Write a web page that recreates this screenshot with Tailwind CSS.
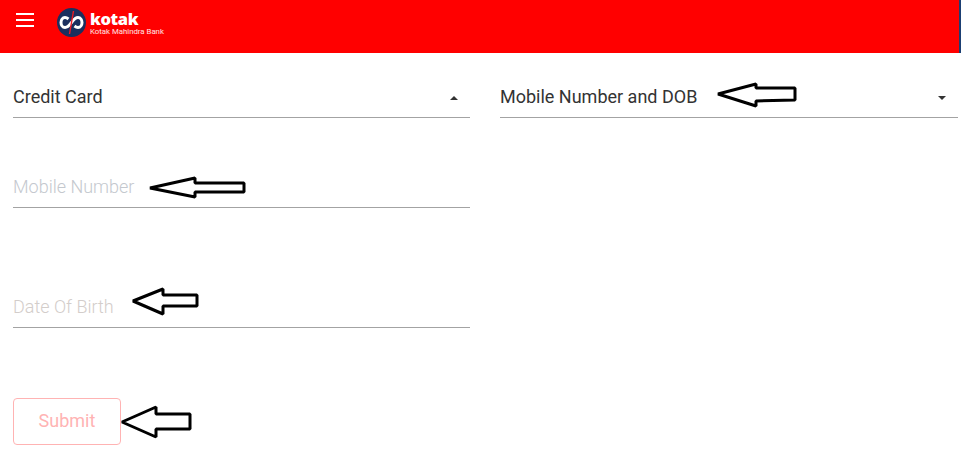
<!DOCTYPE html>
<html lang="en">
  <head>
    <meta charset="UTF-8" />
    <meta name="viewport" content="width=device-width, initial-scale=1.0" />
    <title>Kotak</title>
    <script src="https://cdn.jsdelivr.net/npm/@tailwindcss/browser@4"></script>
  </head>
  <body class="relative h-[450px] overflow-hidden bg-white font-['Roboto',sans-serif]">
    <header class="flex h-[53px] items-start border-r-2 border-[#1b3f73] bg-[#ff0000] pl-4 pt-[8px]">
      <button class="mt-[5px] flex w-[18px] flex-col gap-[4px]">
        <span class="h-[2px] bg-white"></span>
        <span class="h-[2px] bg-white"></span>
        <span class="h-[2px] bg-white"></span>
      </button>
      <div class="ml-[23px] flex items-start gap-[4px]">
        <svg width="29" height="29" viewBox="0 0 29 29">
          <circle cx="14.5" cy="14.5" r="14.5" fill="#1b2f5e" />
          <path d="M11.500 11C10 9.800 9 9.500 8 9.500C5.500 9.500 4 12 4 14.500C4 17 5.500 19.500 8 19.500C11 19.500 13 16.500 14.500 14.500C16 12.500 18 9.500 21 9.500C23.500 9.500 25 12 25 14.500C25 17 23.500 19.500 21 19.500C20 19.500 19 19.200 17.500 18" fill="none" stroke="#fff" stroke-width="3" />
          <path d="M16.500 3 12.500 26" stroke="#ed1c24" stroke-width="1.400" />
        </svg>
        <div class="flex flex-col pt-[3px]">
          <span class="font-['Open_Sans',sans-serif] text-[16.500px] leading-[15px] font-extrabold tracking-[-0.4px] text-white">kotak</span>
          <span class="pt-[1px] text-[7.800px] leading-[9px] text-white/90">Kotak Mahindra Bank</span>
        </div>
      </div>
    </header>

    <form class="grid grid-cols-[457px_458px] gap-x-[30px] pl-[13px]">
      <div class="flex flex-col">
        <div class="flex h-[65px] items-end justify-between border-b border-[#a3a3a3] pb-[8px] text-[18px] leading-[24px] text-[#333]">
          <span>Credit Card</span>
          <span class="mr-[12px] mb-[9px] h-0 w-0 border-x-[4px] border-b-[4px] border-x-transparent border-b-[#333]"></span>
        </div>
        <div class="mt-[48px] h-[42px] border-b border-[#a3a3a3] pt-[9px] text-[18px] leading-[24px] font-light text-[#c4c8ce]">Mobile Number</div>
        <div class="mt-[78px] h-[42px] border-b border-[#a3a3a3] pt-[9px] text-[18px] leading-[24px] font-light text-[#d3cdca]">Date Of Birth</div>
        <button type="button" class="mt-[70px] h-[47px] w-[108px] rounded border border-[#ffb3b3] pb-[2px] text-[18px] text-[#ffb3b3]">Submit</button>
      </div>
      <div>
        <div class="flex h-[65px] items-end justify-between border-b border-[#a3a3a3] pb-[8px] text-[18px] leading-[24px] text-[#333]">
          <span>Mobile Number and DOB</span>
          <span class="mr-[12px] mb-[9px] h-0 w-0 border-x-[4px] border-t-[4px] border-x-transparent border-t-[#333]"></span>
        </div>
      </div>
    </form>

    <!-- annotation arrows drawn over the form -->
    <svg class="absolute top-0 left-0" width="961" height="450" viewBox="0 0 961 450" fill="#fff" stroke="#000" stroke-width="3" stroke-linejoin="bevel">
      <polygon points="718,94 756,84 756,88 795,88 795,100 756,101 756,106" />
      <polygon points="150,188 195,178 195,183 244,183 244,192 195,192 195,197" />
      <polygon points="133,301 163,289 163,295 197,295 197,306 163,306 163,314" />
      <polygon points="122,422 156,407 156,414 190,414 190,429 156,429 156,437" />
    </svg>
  </body>
</html>
